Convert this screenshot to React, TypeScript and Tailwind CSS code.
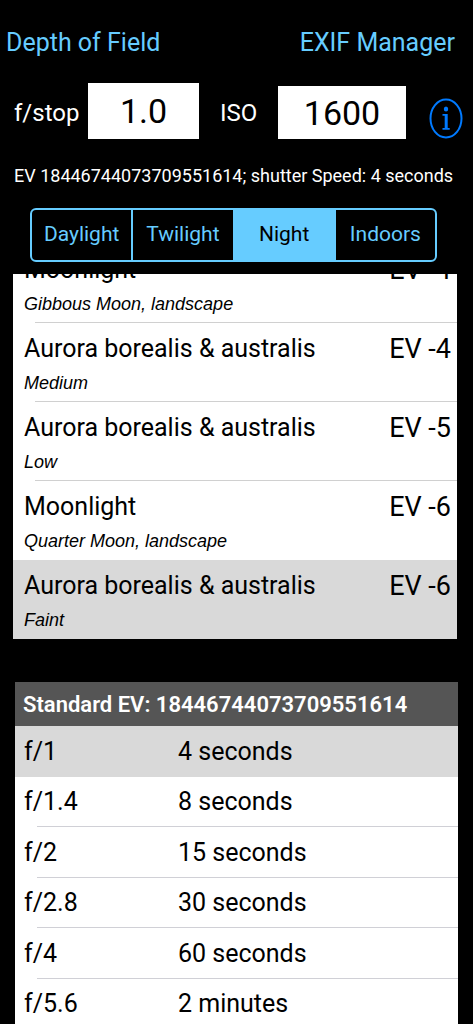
import { useState } from 'react';

const periods = ['Daylight', 'Twilight', 'Night', 'Indoors'];

const scenes = [
  { id: 1, name: 'Moonlight', detail: 'Gibbous Moon, landscape', ev: 'EV -4' },
  { id: 2, name: 'Aurora borealis & australis', detail: 'Medium', ev: 'EV -4' },
  { id: 3, name: 'Aurora borealis & australis', detail: 'Low', ev: 'EV -5' },
  { id: 4, name: 'Moonlight', detail: 'Quarter Moon, landscape', ev: 'EV -6' },
  { id: 5, name: 'Aurora borealis & australis', detail: 'Faint', ev: 'EV -6' },
];

const exposures = [
  { stop: 'f/1', time: '4 seconds' },
  { stop: 'f/1.4', time: '8 seconds' },
  { stop: 'f/2', time: '15 seconds' },
  { stop: 'f/2.8', time: '30 seconds' },
  { stop: 'f/4', time: '60 seconds' },
  { stop: 'f/5.6', time: '2 minutes' },
];

function InfoIcon() {
  return (
    <svg viewBox="0 0 34 42" className="h-[42px] w-[34px]" fill="none" aria-hidden="true">
      <ellipse cx="17" cy="21.5" rx="15.5" ry="19" stroke="#007aff" strokeWidth="2" />
      <ellipse cx="17" cy="12" rx="2.2" ry="2.6" fill="#007aff" />
      <path d="M13.5 17.1h5.2v14h2v1.7h-7.2v-1.7h2.2V18.8h-2.2z" fill="#007aff" />
    </svg>
  );
}

export default function App() {
  const [period, setPeriod] = useState('Night');
  const [sceneId, setSceneId] = useState(5);
  const [fStop, setFStop] = useState('1.0');
  const [iso, setIso] = useState('1600');

  return (
    <main className="flex h-screen flex-col overflow-hidden bg-black font-['Roboto',sans-serif] text-white">
      <nav className="flex justify-between pt-[25px] pr-[18px] pl-[6px] text-[25px] leading-9 text-[#66ccff]">
        <a href="#depth">Depth of Field</a>
        <a href="#exif">EXIF Manager</a>
      </nav>

      <section className="flex items-end pt-[22px] pr-[10px] pl-[14px] text-[24px]">
        <label htmlFor="fstop" className="w-[74px] shrink-0 pb-2 leading-9">
          f/stop
        </label>
        <input
          id="fstop"
          value={fStop}
          onChange={(e) => setFStop(e.target.value)}
          className="h-14 w-0 flex-[111] bg-white text-center text-[34px] text-black"
        />
        <label htmlFor="iso" className="w-[79px] shrink-0 pb-2 pl-[21px] leading-9">
          ISO
        </label>
        <input
          id="iso"
          value={iso}
          onChange={(e) => setIso(e.target.value)}
          className="h-[53px] w-0 flex-[128] bg-white text-center text-[34px] text-black"
        />
        <button type="button" aria-label="Info" className="ml-[23px] shrink-0">
          <InfoIcon />
        </button>
      </section>

      <p className="pt-[23px] pl-[14px] text-[18px] leading-7 whitespace-nowrap">
        EV 18446744073709551614; shutter Speed: 4 seconds
      </p>

      <div className="mt-[18px] mr-9 ml-[30px] flex h-[54px] shrink-0 divide-x-2 divide-[#66ccff] overflow-hidden rounded-md border-2 border-[#66ccff]">
        {periods.map((name) => (
          <button
            key={name}
            type="button"
            aria-pressed={name === period}
            onClick={() => setPeriod(name)}
            className={`flex-1 text-[21px] ${
              name === period ? 'bg-[#66ccff] text-black' : 'text-[#66ccff]'
            }`}
          >
            {name}
          </button>
        ))}
      </div>

      {/* scrolled to the end, so the first row is cut off at the top */}
      <ul className="mt-3 mr-4 ml-[13px] flex h-[365px] shrink-0 flex-col justify-end overflow-hidden bg-white text-black">
        {scenes.map((scene, index) => (
          <li key={scene.id} className={`h-[79px] shrink-0 ${scene.id === sceneId ? 'bg-[#d9d9d9]' : ''}`}>
            <button
              type="button"
              onClick={() => setSceneId(scene.id)}
              className="block h-[78px] w-full pt-[6px] pr-[6px] pl-[11px] text-left"
            >
              <span className="flex justify-between text-[25px] leading-9">
                <span>{scene.name}</span>
                <span className="text-[27px]">{scene.ev}</span>
              </span>
              <span className="block font-['Liberation_Sans',sans-serif] text-[18px] leading-8 italic">
                {scene.detail}
              </span>
            </button>
            {index < scenes.length - 2 && <div className="ml-[22px] h-px bg-[#d0d0d0]" />}
          </li>
        ))}
      </ul>

      <section className="mt-[43px] mr-[15px] ml-[15px] min-h-0 flex-1 overflow-hidden bg-white text-black">
        <h2 className="h-11 bg-[#555555] pl-2 text-[22px] leading-[46px] font-semibold text-white">
          Standard EV: 18446744073709551614
        </h2>
        <table className="h-[303px] w-full table-fixed text-left text-[25px]">
          <tbody>
            {exposures.map((row, index) => (
              <tr
                key={row.stop}
                className={
                  index === 0
                    ? 'bg-[#d9d9d9]'
                    : 'bg-[linear-gradient(#d0d0d6,#d0d0d6)] bg-[length:calc(100%-22px)_1px] bg-right-bottom bg-no-repeat'
                }
              >
                <th scope="row" className="w-[163px] p-0 pl-[9px] font-normal">
                  {row.stop}
                </th>
                <td className="p-0">{row.time}</td>
              </tr>
            ))}
          </tbody>
        </table>
      </section>
    </main>
  );
}
